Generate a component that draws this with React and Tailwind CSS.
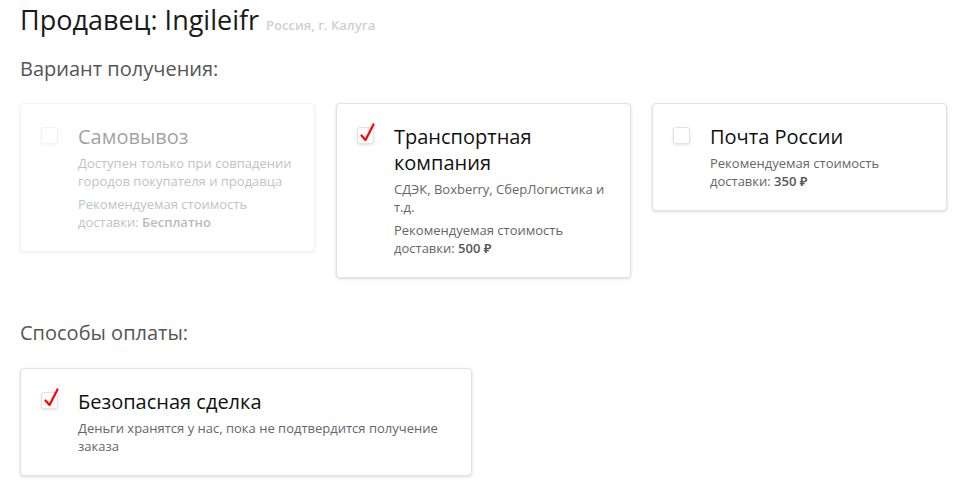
import React from 'react';

const font = { fontFamily: '"Open Sans", "Noto Sans", Arial, sans-serif' };

function Check({ checked }) {
    return (
        <span className="relative mt-[3px] block h-[17px] w-[17px] shrink-0 rounded-[3px] border border-[#e3e3e3] bg-white shadow-[0_1px_3px_rgba(0,0,0,0.12)]">
            {checked && (
                <svg className="absolute left-[1px] top-[-5px]" width="17" height="20" viewBox="0 0 17 20">
                    <path d="M2.5 12.5 L6.5 17 L14.5 1.5" fill="none" stroke="#ff0000" strokeWidth="2.2" strokeLinecap="round" strokeLinejoin="round" />
                </svg>
            )}
        </span>
    );
}

function OptionCard({ title, checked, disabled, children }) {
    return (
        <div
            className={`flex gap-5 rounded-[4px] border border-[#e2e2e2] bg-white px-5 pt-5 pb-5 shadow-[0_1px_3px_rgba(0,0,0,0.15)] ${
                disabled ? 'opacity-40' : ''
            }`}
        >
            <Check checked={checked} />
            <div className="min-w-0">
                <div className="text-[20px] leading-[26px] text-[#111]">{title}</div>
                <div className="mt-[4px] text-[13px] leading-[18px] text-[#666]">{children}</div>
            </div>
        </div>
    );
}

const Price = ({ value }) => (
    <>
        Рекомендуемая стоимость доставки: <b className="font-semibold text-[#555]">{value}</b>
    </>
);

export default function App() {
    return (
        <div className="min-h-screen bg-white px-5 pt-[3px]" style={font}>
            <h1 className="flex items-baseline gap-[7px] text-[27px] leading-[34px] text-[#1a1a1a]">
                Продавец: Ingileifr
                <span className="text-[13px] leading-none font-semibold text-[#cfcfcf]">Россия, г. Калуга</span>
            </h1>

            <h2 className="mt-[18px] text-[20px] leading-[28px] text-[#555]">Вариант получения:</h2>
            <div className="mt-5 grid grid-cols-3 items-start gap-[21px]">
                <OptionCard title="Самовывоз" disabled>
                    <p>Доступен только при совпадении городов покупателя и продавца</p>
                    <p className="mt-[5px]">
                        <Price value="Бесплатно" />
                    </p>
                </OptionCard>
                <OptionCard title="Транспортная компания" checked>
                    <p>СДЭК, Boxberry, СберЛогистика и т.д.</p>
                    <p className="mt-[5px]">
                        <Price value="500 ₽" />
                    </p>
                </OptionCard>
                <OptionCard title="Почта России">
                    <p>
                        <Price value="350 ₽" />
                    </p>
                </OptionCard>
            </div>

            <h2 className="mt-[41px] text-[20px] leading-[28px] text-[#555]">Способы оплаты:</h2>
            <div className="mt-[21px] w-[452px]">
                <OptionCard title="Безопасная сделка" checked>
                    <p>Деньги хранятся у нас, пока не подтвердится получение заказа</p>
                </OptionCard>
            </div>
        </div>
    );
}
